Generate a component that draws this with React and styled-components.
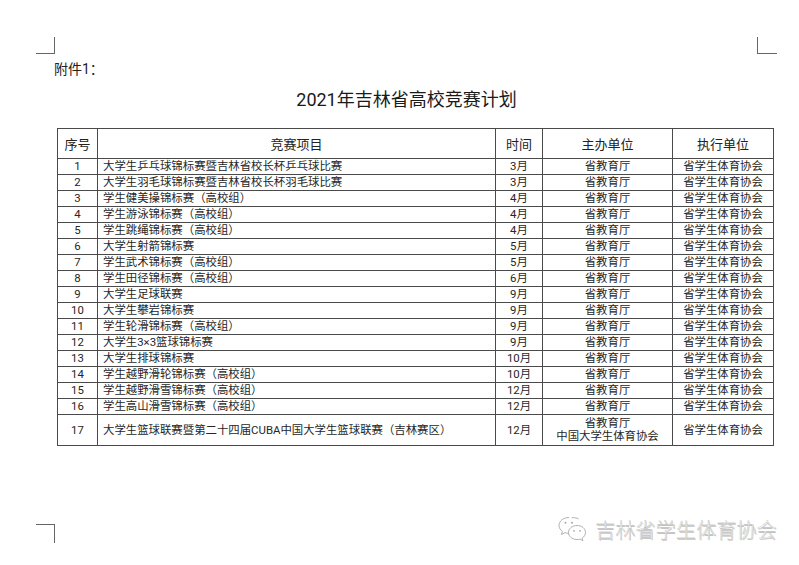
import React from "react"
import styled, {createGlobalStyle} from "styled-components"

const GlobalStyle = createGlobalStyle`
  html, body {
    margin: 0;
    padding: 0;
    background: #fff;
  }
  body {
    font-family: Roboto, "Noto Sans CJK SC", sans-serif;
    color: #222;
  }
`

const Page = styled.div`
  width: 799px;
  height: 565px;
  overflow: hidden;
  background: #fff;
  display: flex;
  flex-direction: column;
`

const MarkRow = styled.div`
  display: flex;
  justify-content: space-between;
  padding: 37px 22px 0 36px;
`

const CropMark = styled.div`
  width: ${p => p.$w || 18}px;
  height: 16px;
  border-color: #666;
  border-style: solid;
  border-width: 0;
  ${p => p.$side === 'left' ? 'border-right-width: 1px; border-bottom-width: 1px;' : ''}
  ${p => p.$side === 'right' ? 'border-left-width: 1px; border-bottom-width: 1px;' : ''}
  ${p => p.$side === 'bottom' ? 'border-right-width: 1px; border-top-width: 1px; height: 18px; margin-top: 9px;' : ''}
`

const Attachment = styled.div`
  margin: 5px 0 0 54px;
  font-size: 14px;
  line-height: 20px;
  color: #222;
`

const Title = styled.h1`
  margin: 9px 0 0 0;
  padding-left: 14px;
  text-align: center;
  font-size: 18px;
  line-height: 24px;
  font-weight: 400;
  color: #1a1a1a;
`

const Table = styled.table`
  margin: 16px 0 0 57px;
  width: 716px;
  border-collapse: collapse;
  table-layout: fixed;
  border: 1.5px solid #555;

  th, td {
    border: 1px solid #4a4a4a;
    padding: 0;
  }

  th {
    height: 29px;
    font-size: 13px;
    font-weight: 400;
    color: #222;
  }

  td {
    height: 15px;
    font-size: 11.4px;
    line-height: 15px;
    color: #262626;
    text-align: center;
  }
`

const NameCell = styled.td`
  && {
    text-align: left;
    padding-left: 5px;
    white-space: nowrap;
  }
`

const TallRow = styled.tr`
  td {
    height: 30px;
    line-height: 13px;
  }
`

const Footer = styled.div`
  margin-top: auto;
  margin-bottom: 22px;
  display: flex;
  justify-content: space-between;
  align-items: flex-start;
  padding: 0 22px 0 36px;
`

const Watermark = styled.div`
  display: flex;
  align-items: center;
  gap: 7px;
  height: 28px;
`

const WatermarkText = styled.span`
  font-family: "Noto Sans CJK SC", sans-serif;
  font-size: 20px;
  font-weight: 300;
  letter-spacing: 0.2px;
  color: #fff;
  -webkit-text-stroke: 0.3px #a5a5a5;
  text-shadow: 0.7px 0.7px 0 #cfcfcf;
`

const rows = [
  ['1', '大学生乒乓球锦标赛暨吉林省校长杯乒乓球比赛', '3月'],
  ['2', '大学生羽毛球锦标赛暨吉林省校长杯羽毛球比赛', '3月'],
  ['3', '学生健美操锦标赛（高校组）', '4月'],
  ['4', '学生游泳锦标赛（高校组）', '4月'],
  ['5', '学生跳绳锦标赛（高校组）', '4月'],
  ['6', '大学生射箭锦标赛', '5月'],
  ['7', '学生武术锦标赛（高校组）', '5月'],
  ['8', '学生田径锦标赛（高校组）', '6月'],
  ['9', '大学生足球联赛', '9月'],
  ['10', '大学生攀岩锦标赛', '9月'],
  ['11', '学生轮滑锦标赛（高校组）', '9月'],
  ['12', '大学生3×3篮球锦标赛', '9月'],
  ['13', '大学生排球锦标赛', '10月'],
  ['14', '学生越野滑轮锦标赛（高校组）', '10月'],
  ['15', '学生越野滑雪锦标赛（高校组）', '12月'],
  ['16', '学生高山滑雪锦标赛（高校组）', '12月'],
]

function WeChatIcon() {
  return (
    <svg width="31" height="28" viewBox="0 0 31 28" fill="none" stroke="#a8a8a8" strokeWidth="0.9">
      <path d="M12 2.5c-5.5 0-10 3.6-10 8 0 2.4 1.3 4.5 3.4 6l-0.9 3 3.4-1.8c1.2 0.4 2.6 0.6 4.1 0.6" />
      <path d="M21.5 3.8c-2-0.9-4.4-1.3-6.8-1.1" />
      <circle cx="8.5" cy="7.8" r="1" fill="#a8a8a8" stroke="none" />
      <circle cx="15" cy="7.8" r="1" fill="#a8a8a8" stroke="none" />
      <path d="M20 10.5c-4.8 0-8.5 3.1-8.5 7s3.7 7 8.5 7c1 0 2-0.1 2.9-0.4l2.9 1.6-0.7-2.6c2-1.3 3.4-3.3 3.4-5.6 0-3.9-3.7-7-8.5-7z" />
      <circle cx="17" cy="15.8" r="0.9" fill="#a8a8a8" stroke="none" />
      <circle cx="23" cy="15.8" r="0.9" fill="#a8a8a8" stroke="none" />
    </svg>
  )
}

export default function App() {
  return (
    <Page>
      <GlobalStyle />
      <MarkRow>
        <CropMark $side="left" />
        <CropMark $side="right" $w={19} />
      </MarkRow>
      <Attachment>附件1：</Attachment>
      <Title>2021年吉林省高校竞赛计划</Title>
      <Table>
        <colgroup>
          <col style={{width: 40}} />
          <col style={{width: 398}} />
          <col style={{width: 47}} />
          <col style={{width: 130}} />
          <col style={{width: 101}} />
        </colgroup>
        <thead>
          <tr>
            <th>序号</th>
            <th>竞赛项目</th>
            <th>时间</th>
            <th>主办单位</th>
            <th>执行单位</th>
          </tr>
        </thead>
        <tbody>
          {rows.map(([n, name, month]) => (
            <tr key={n}>
              <td>{n}</td>
              <NameCell>{name}</NameCell>
              <td>{month}</td>
              <td>省教育厅</td>
              <td>省学生体育协会</td>
            </tr>
          ))}
          <TallRow>
            <td>17</td>
            <NameCell>大学生篮球联赛暨第二十四届CUBA中国大学生篮球联赛（吉林赛区）</NameCell>
            <td>12月</td>
            <td>省教育厅<br />中国大学生体育协会</td>
            <td>省学生体育协会</td>
          </TallRow>
        </tbody>
      </Table>
      <Footer>
        <CropMark $side="bottom" />
        <Watermark>
          <WeChatIcon />
          <WatermarkText>吉林省学生体育协会</WatermarkText>
        </Watermark>
      </Footer>
    </Page>
  )
}
